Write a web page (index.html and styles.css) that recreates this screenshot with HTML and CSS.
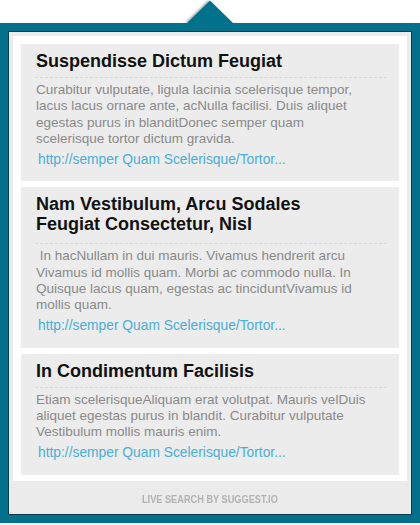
FILE: index.html
```html
<!DOCTYPE html>
<html lang="en">
<head>
<meta charset="utf-8">
<title>Live search results</title>
<link rel="stylesheet" href="styles.css">
</head>
<body>
<div class="pointer">
  <svg class="pointer-svg" width="60" height="23" viewBox="0 0 60 23" aria-hidden="true">
    <defs>
      <filter id="psh" x="-30%" y="-30%" width="160%" height="160%">
        <feDropShadow dx="-2" dy="0" stdDeviation="1.2" flood-color="#000" flood-opacity="0.35"/>
      </filter>
    </defs>
    <polygon points="7,23 30,0.5 53,23" fill="#03718b" filter="url(#psh)"/>
  </svg>
</div>
<div class="frame">
  <div class="inner">
    <div class="results">
      <div class="card">
        <h3 class="title">Suspendisse Dictum Feugiat</h3>
        <p class="text">Curabitur vulputate, ligula lacinia scelerisque tempor,<br>lacus lacus ornare ante, acNulla facilisi. Duis aliquet<br>egestas purus in blanditDonec semper quam<br>scelerisque tortor dictum gravida.</p>
        <a class="link" href="#">http://semper Quam Scelerisque/Tortor...</a>
      </div>
      <div class="card">
        <h3 class="title title-wrap">Nam Vestibulum, Arcu Sodales Feugiat Consectetur, Nisl</h3>
        <p class="text">&nbsp;In hacNullam in dui mauris. Vivamus hendrerit arcu<br>Vivamus id mollis quam. Morbi ac commodo nulla. In<br>Quisque lacus quam, egestas ac tinciduntVivamus id<br>mollis quam.</p>
        <a class="link" href="#">http://semper Quam Scelerisque/Tortor...</a>
      </div>
      <div class="card">
        <h3 class="title">In Condimentum Facilisis</h3>
        <p class="text">Etiam scelerisqueAliquam erat volutpat. Mauris velDuis<br>aliquet egestas purus in blandit. Curabitur vulputate<br>Vestibulum mollis mauris enim.</p>
        <a class="link" href="#">http://semper Quam Scelerisque/Tortor...</a>
      </div>
    </div>
    <div class="footer"><span class="footer-text">LIVE SEARCH BY SUGGEST.IO</span></div>
  </div>
</div>
</body>
</html>
```
FILE: styles.css
```css
html, body {
  margin: 0;
  padding: 0;
  background: #ffffff;
}

body {
  font-family: "Liberation Sans", Arial, sans-serif;
}

.pointer {
  display: flex;
  justify-content: center;
  height: 23px;
}

.pointer-svg {
  display: block;
}

.frame {
  border: 8px solid #03718b;
  box-shadow: 0 2px 2px rgba(0, 0, 0, 0.28);
  background: #03718b;
}

.inner {
  border: 1px solid #0c3a49;
  background: #ebebeb;
  padding: 4px;
}

.results {
  background: #ffffff;
  padding: 8px 8px 0;
  display: flex;
  flex-direction: column;
}

.card {
  background: #ececec;
  padding: 7px 12px 13px 14px;
  margin-bottom: 6px;
  display: flex;
  flex-direction: column;
  align-items: flex-start;
}

.title {
  align-self: stretch;
  margin: 0;
  font-size: 18px;
  line-height: 20px;
  font-weight: bold;
  color: #111111;
  padding: 0 26px 6px 1px;
  border-bottom: 1px dashed #d8d8d8;
}

.title-wrap {
  padding-bottom: 9px;
}

.text {
  margin: 4px 0 0;
  padding-left: 1px;
  font-size: 13.5px;
  line-height: 16.25px;
  color: #8a8a8a;
  white-space: nowrap;
}

.link {
  margin-top: 5px;
  padding-left: 3px;
  font-size: 13.8px;
  line-height: 16.25px;
  color: #4aaed6;
  text-decoration: none;
}

.footer {
  padding: 12px 0 4px;
  line-height: 13px;
  text-align: center;
  font-family: "Liberation Sans", Arial, sans-serif;
  font-weight: bold;
  font-size: 11.5px;
  color: #b2b2b2;
}

.footer-text {
  display: inline-block;
  transform: scaleX(0.8);
}
```
